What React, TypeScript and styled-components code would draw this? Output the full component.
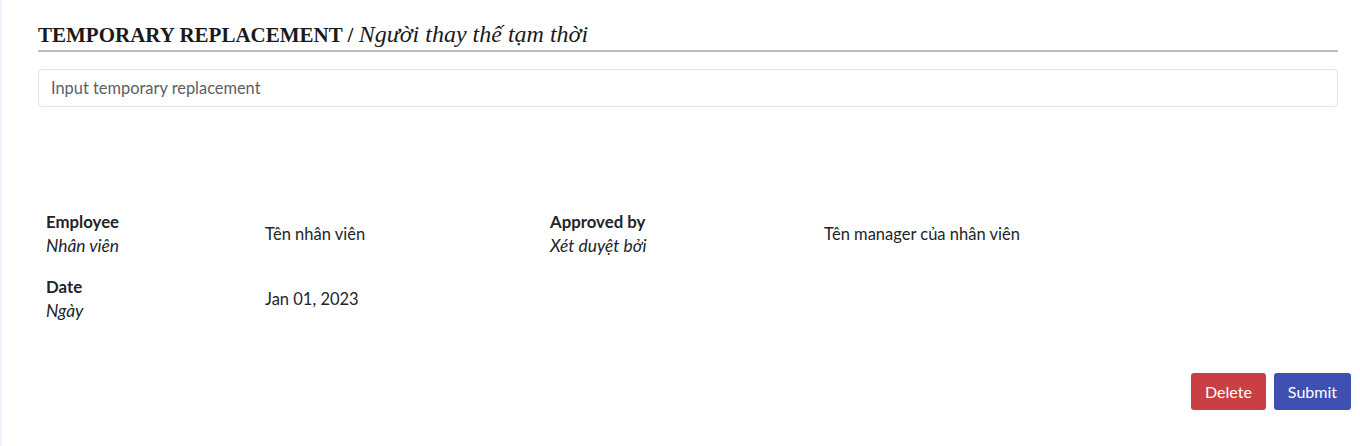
import React from "react";
import styled, { createGlobalStyle } from "styled-components";

const Global = createGlobalStyle`
  html, body { margin: 0; padding: 0; }
  body {
    background: #eef1fb;
    font-family: Lato, "Noto Sans", sans-serif;
    color: #212529;
  }
`;

const Card = styled.div`
  margin-left: 2px;
  background: #ffffff;
  min-height: 446px;
  box-sizing: border-box;
  padding: 21px 9px 0 36px;
  display: flex;
  flex-direction: column;
`;

const Section = styled.section`
  margin-right: 13px;
`;

const Title = styled.h2`
  margin: 0;
  font-family: "Liberation Serif", "Times New Roman", serif;
  font-size: 21px;
  line-height: 26px;
  font-weight: 700;
  color: #1a1a1a;
  padding-bottom: 2px;
  border-bottom: 2px solid #bdbdbd;
`;

const TitleVi = styled.span`
  font-weight: 400;
  font-style: italic;
  font-size: 24px;
`;

const Input = styled.input`
  display: block;
  box-sizing: border-box;
  width: 100%;
  height: 38px;
  margin-top: 17px;
  padding: 0 12px 1px;
  border: 1px solid #dde4ec;
  border-radius: 4px;
  font-family: Lato, "Noto Sans", sans-serif;
  font-size: 16.4px;
  color: #212529;
  outline: none;
  &::placeholder { color: #5a5f66; }
`;

const InfoGrid = styled.div`
  display: grid;
  grid-template-columns: 219px 285px 274px 1fr;
  row-gap: 17px;
  margin-top: 103px;
  padding-left: 8px;
  align-items: center;
`;

const Label = styled.div`
  font-size: 16.8px;
  line-height: 24px;
  font-weight: 700;
  color: #212529;
`;

const LabelVi = styled.div`
  font-size: 17.4px;
  line-height: 24px;
  font-style: italic;
  color: #212529;
`;

const Value = styled.div`
  font-size: 16.5px;
  line-height: 24px;
  color: #212529;
`;

const Actions = styled.div`
  display: flex;
  justify-content: flex-end;
  gap: 8px;
  margin-top: 50px;
`;

const Button = styled.button<{ $variant: "danger" | "primary" }>`
  height: 37px;
  padding: 0 14px;
  border: none;
  border-radius: 3px;
  font-family: Lato, "Noto Sans", sans-serif;
  font-size: 16px;
  color: #ffffff;
  background: ${(p) => (p.$variant === "danger" ? "#c93f42" : "#3e51b2")};
  cursor: pointer;
`;

export default function App() {
  return (
    <>
      <Global />
      <Card>
        <Section>
          <Title>
            TEMPORARY REPLACEMENT / <TitleVi>Người thay thế tạm thời</TitleVi>
          </Title>
          <Input placeholder="Input temporary replacement" />
          <InfoGrid>
            <div>
              <Label>Employee</Label>
              <LabelVi>Nhân viên</LabelVi>
            </div>
            <Value>Tên nhân viên</Value>
            <div>
              <Label>Approved by</Label>
              <LabelVi>Xét duyệt bởi</LabelVi>
            </div>
            <Value>Tên manager của nhân viên</Value>
            <div>
              <Label>Date</Label>
              <LabelVi>Ngày</LabelVi>
            </div>
            <Value>Jan 01, 2023</Value>
            <div />
            <div />
          </InfoGrid>
        </Section>
        <Actions>
          <Button $variant="danger">Delete</Button>
          <Button $variant="primary">Submit</Button>
        </Actions>
      </Card>
    </>
  );
}
